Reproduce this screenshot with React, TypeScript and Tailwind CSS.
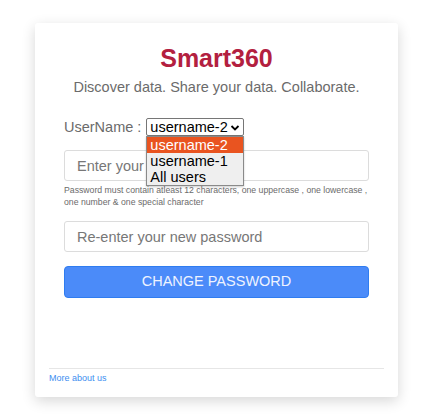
import React from 'react'

const users = ['username-2', 'username-1', 'All users']

const App: React.FC = () => {
    return (
        <div className="min-h-[419px] w-[437px] bg-white pt-[23px] pl-[35px] font-['Liberation_Sans',Arial,sans-serif]">
            {/* CARD */}
            <div className="w-[363px] h-[374px] bg-white rounded-[3px] shadow-[0_4px_14px_rgba(0,0,0,0.16)] flex flex-col">
                <div className="px-[29px] pt-[21px] flex flex-col">
                    <h1 className="text-center text-[25px] leading-[29px] font-bold text-[#b3203f]">Smart360</h1>
                    <p className="mt-[5px] text-center text-[14.5px] leading-[18px] text-[#6b6b6b]">
                        Discover data. Share your data. Collaborate.
                    </p>

                    {/* USER SELECT */}
                    <div className="mt-[22px] flex items-center h-[18px] relative">
                        <span className="text-[14.5px] leading-[18px] text-[#6b6b6b]">UserName :</span>
                        <div className="ml-[5px] relative">
                            <div className="w-[98px] h-[18px] border border-[#767676] rounded-[2px] flex items-center justify-between pl-[3px] pr-[3px] text-[14.5px] leading-[16px] text-black bg-white">
                                <span>username-2</span>
                                <svg width="10" height="8" viewBox="0 0 10 8" className="mt-[1px]">
                                    <path d="M1.5 2 L5 5.5 L8.5 2" fill="none" stroke="#000" strokeWidth="1.8" />
                                </svg>
                            </div>
                            {/* OPEN LIST */}
                            <div className="absolute left-0 top-[18px] z-10 w-[98px] border border-[#8a8a8a] bg-[#efefef] shadow-[0_1px_2px_rgba(0,0,0,0.2)] flex flex-col">
                                {users.map((u, i) => (
                                    <div
                                        key={u}
                                        className={`h-[16px] leading-[16px] px-[3px] text-[14.5px] ${i === 0 ? 'bg-[#e95420] text-white' : 'text-black'}`}
                                    >
                                        {u}
                                    </div>
                                ))}
                            </div>
                        </div>
                    </div>

                    {/* PASSWORD */}
                    <input
                        type="password"
                        placeholder="Enter your new password"
                        className="mt-[14px] h-[31px] w-full border border-[#dcdcdc] rounded-[3px] px-[12px] text-[14.5px] placeholder:text-[#777] outline-none"
                    />
                    <p className="mt-[3px] mr-[-4px] text-[8.7px] leading-[12px] text-[#6b6b6b]">
                        Password must contain atleast 12 characters, one uppercase , one lowercase , one number &amp; one special character
                    </p>

                    <input
                        type="password"
                        placeholder="Re-enter your new password"
                        className="mt-[13px] h-[31px] w-full border border-[#dcdcdc] rounded-[3px] px-[12px] text-[14.5px] placeholder:text-[#777] outline-none"
                    />

                    <button className="mt-[14px] h-[32px] w-full rounded-[4px] bg-[#4b8bf9] border border-[#2f7cf0] text-[14.5px] text-[#eef3ff]">
                        CHANGE PASSWORD
                    </button>
                </div>

                {/* FOOTER */}
                <div className="mt-auto mx-[14px] border-t border-[#e6e6e6] pt-[3px] pb-[13px] text-[9px] leading-[12px]">
                    <a href="#" className="block text-[#3d8ef0]">More about us</a>
                </div>
            </div>
        </div>
    )
}

export default App
